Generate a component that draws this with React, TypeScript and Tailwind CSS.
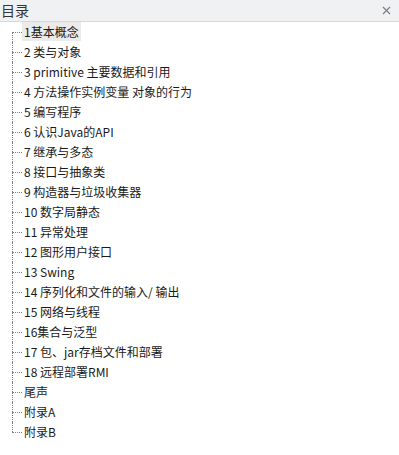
import React from "react";

const items = [
  "1基本概念",
  "2 类与对象",
  "3 primitive 主要数据和引用",
  "4 方法操作实例变量 对象的行为",
  "5 编写程序",
  "6 认识Java的API",
  "7 继承与多态",
  "8 接口与抽象类",
  "9 构造器与垃圾收集器",
  "10 数字局静态",
  "11 异常处理",
  "12 图形用户接口",
  "13 Swing",
  "14 序列化和文件的输入/ 输出",
  "15 网络与线程",
  "16集合与泛型",
  "17 包、jar存档文件和部署",
  "18 远程部署RMI",
  "尾声",
  "附录A",
  "附录B",
];

export default function App() {
  return (
    <div
      className="w-[399px] h-[455px] bg-white overflow-hidden"
      style={{ fontFamily: '"Noto Sans CJK SC", "Noto Sans", sans-serif' }}
    >
      <div className="h-[22px] bg-[#f0f1f3] border-b border-[#d6d7d9] flex items-center justify-between pl-[1px] pr-[8px]">
        <span className="text-[14px] leading-[21px] text-[#333333]">目录</span>
        <svg width="9" height="9" viewBox="0 0 9 9" className="mb-[1px]">
          <path d="M1 1 L8 8 M8 1 L1 8" stroke="#7a7f87" strokeWidth="1.2" />
        </svg>
      </div>
      <ul className="pl-[12px]">
        {items.map((t, i) => {
          const first = i === 0;
          const last = i === items.length - 1;
          return (
            <li key={i} className="h-[20px] flex">
              <div className="w-[10px] flex flex-col">
                <div
                  className={
                    first
                      ? "h-[10px]"
                      : "h-[10px] border-l border-dotted border-[#808080]"
                  }
                />
                <div
                  className={
                    last
                      ? "h-[10px] border-t border-dotted border-[#808080]"
                      : "h-[10px] border-t border-l border-dotted border-[#808080]"
                  }
                />
              </div>
              <div
                className={
                  first
                    ? "h-[19px] px-[2px] leading-[19px] text-[12px] text-[#1a1a1a] bg-[#ebebeb] whitespace-nowrap"
                    : "h-[19px] px-[2px] leading-[19px] text-[12px] text-[#1a1a1a] whitespace-nowrap"
                }
              >
                {t}
              </div>
            </li>
          );
        })}
      </ul>
    </div>
  );
}
